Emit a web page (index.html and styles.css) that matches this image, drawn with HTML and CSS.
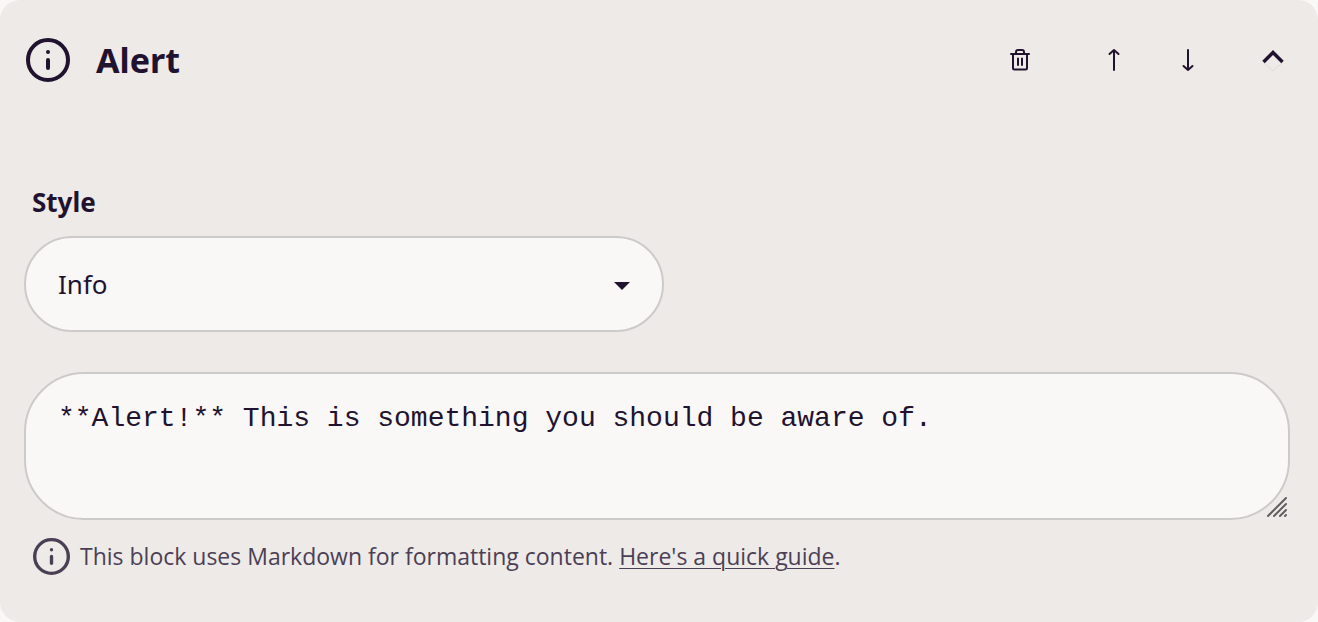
FILE: index.html
```html
<!DOCTYPE html>
<html lang="en">
<head>
<meta charset="utf-8">
<meta name="viewport" content="width=device-width, initial-scale=1">
<title>Alert block</title>
<link rel="stylesheet" href="styles.css">
</head>
<body>
<main class="block">
  <header class="block-header">
    <svg class="info-icon" viewBox="0 0 44 44" aria-hidden="true">
      <circle class="ring" cx="22" cy="22" r="20"/>
      <circle class="dot" cx="22" cy="14" r="2"/>
      <path class="stem" d="M22 22v8"/>
    </svg>
    <h1 class="block-title">Alert</h1>
    <div class="actions">
      <button class="action action-delete" type="button" aria-label="Delete block">
        <svg class="icon" viewBox="0 0 24 24" aria-hidden="true"><path d="M3 6h18M5 6V20a1.500 1.500 0 0 0 1.500 1.500h11a1.500 1.500 0 0 0 1.500-1.500V6M8 6V4a2 2 0 0 1 2-2h4a2 2 0 0 1 2 2V6M10 10.500v6.500M14 10.500v6.500"/></svg>
      </button>
      <button class="action action-up" type="button" aria-label="Move up">
        <svg class="icon" viewBox="0 0 24 24" aria-hidden="true"><path d="M12 22V2M7.500 6L12 2l4.500 4"/></svg>
      </button>
      <button class="action action-down" type="button" aria-label="Move down">
        <svg class="icon" viewBox="0 0 24 24" aria-hidden="true"><path d="M12 2V22M7.500 18l4.500 4 4.500-4"/></svg>
      </button>
      <button class="action" type="button" aria-label="Collapse block" aria-expanded="true">
        <svg class="icon" viewBox="0 0 24 24" aria-hidden="true"><path class="chevron-edge" d="M3 15l9 8 9-8"/><path class="chevron" d="M2.500 14L12 4.500l9.500 9.500"/></svg>
      </button>
    </div>
  </header>

  <div class="field">
    <label class="field-label" for="style">Style</label>
    <div class="select-wrap">
      <select class="control select" id="style"><option>Info</option><option>Success</option><option>Warning</option></select>
      <svg class="caret" viewBox="0 0 16 8" aria-hidden="true"><path d="M0 0h16L8 8z"/></svg>
    </div>
  </div>

  <div class="editor">
    <textarea class="control textarea" aria-label="Content" aria-describedby="help" spellcheck="false">**Alert!** This is something you should be aware of.</textarea>
    <svg class="grip" viewBox="0 0 22 22" aria-hidden="true"><path d="M2 20L20 2M8 20L20 8M14 20l6-6M19 20l1-1"/></svg>
  </div>

  <div class="help">
    <svg class="info-icon info-icon-small" viewBox="0 0 44 44" aria-hidden="true">
      <circle class="ring" cx="22" cy="22" r="20"/>
      <circle class="dot" cx="22" cy="14" r="2"/>
      <path class="stem" d="M22 22v8"/>
    </svg>
    <p class="help-text" id="help">This block uses Markdown for formatting content. <a class="help-link" href="#guide">Here's a quick guide</a>.</p>
  </div>
</main>
</body>
</html>
```
FILE: styles.css
```css
* { box-sizing: border-box; }

body {
  margin: 0;
  background: #faf8f6;
  color: #21132f;
  font-family: "Noto Sans", sans-serif;
}

.block {
  min-height: 100vh;
  padding: 36px 28px 44px 24px;
  border-radius: 20px;
  background: #eeeae7;
}

.block-header {
  display: flex;
  align-items: center;
  height: 48px;
  padding-left: 2px;
}

.info-icon {
  flex: none;
  width: 44px;
  height: 44px;
  fill: none;
  stroke: currentColor;
  stroke-width: 4;
  stroke-linecap: round;
}

.info-icon .dot {
  fill: currentColor;
  stroke: none;
}

.block-title {
  margin: 0 0 0 26px;
  font-size: 34px;
  line-height: 48px;
  font-weight: 700;
}

.actions {
  display: flex;
  align-items: center;
  margin-left: auto;
}

.action {
  display: flex;
  padding: 5px;
  border: 0;
  background: none;
  color: inherit;
  cursor: pointer;
}

.action-delete { margin-right: 60px; }
.action-up { margin-right: 40px; }
.action-down { margin-right: 51px; }

.icon {
  width: 24px;
  height: 24px;
  fill: none;
  stroke: currentColor;
  stroke-width: 2;
  stroke-linecap: round;
  stroke-linejoin: round;
}

.icon .chevron {
  stroke-width: 3.5;
  stroke-linecap: butt;
  stroke-linejoin: miter;
}

.icon .chevron-edge {
  stroke: #dedad8;
  stroke-width: 1;
}

.field { margin-top: 98px; }

.field-label {
  display: block;
  padding-left: 8px;
  font-size: 26px;
  line-height: 40px;
  font-weight: 700;
}

.select-wrap {
  position: relative;
  max-width: 640px;
  margin-top: 14px;
}

.control {
  display: block;
  width: 100%;
  border: 2px solid #cdcaca;
  background: #faf8f7;
  color: inherit;
}

.select {
  height: 96px;
  padding: 0 72px 0 32px;
  border-radius: 48px;
  appearance: none;
  font-family: inherit;
  font-size: 26px;
}

.caret {
  position: absolute;
  top: 46px;
  right: 34px;
  width: 16px;
  height: 8px;
  fill: currentColor;
  pointer-events: none;
}

.editor {
  position: relative;
  margin-top: 40px;
}

.textarea {
  height: 148px;
  padding: 24px 32px;
  border-radius: 60px;
  resize: none;
  overflow: hidden;
  font-family: "Liberation Mono", monospace;
  font-size: 28px;
  line-height: 42px;
}

.grip {
  position: absolute;
  right: 2px;
  bottom: 2px;
  width: 22px;
  height: 22px;
  fill: none;
  stroke: #625e60;
  stroke-width: 2;
  stroke-linecap: round;
  pointer-events: none;
}

.help {
  display: flex;
  align-items: center;
  gap: 10px;
  margin-top: 16px;
  padding-left: 9px;
  color: #4b3f56;
}

.info-icon-small {
  width: 37px;
  height: 37px;
}

.help-text {
  margin: 0;
  font-family: "Open Sans", "Noto Sans", sans-serif;
  font-size: 23px;
  line-height: 40px;
}

.help-link {
  color: inherit;
  text-decoration-thickness: 1px;
  text-underline-offset: 3px;
}
```
